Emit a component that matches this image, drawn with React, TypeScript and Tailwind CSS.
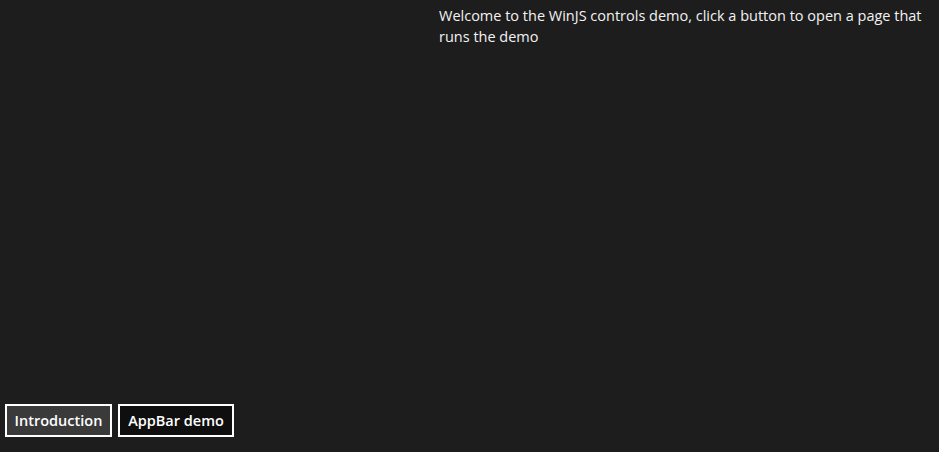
const App = () => {
  return (
    <div className="h-[452px] w-full bg-[#1d1d1d] text-white flex flex-col justify-between font-['Open_Sans',sans-serif]">
      <div className="flex justify-end pt-[5px]">
        <p className="w-[500px] pr-[3px] text-[14.5px] leading-[21px] text-[#f2f2f2]">
          Welcome to the WinJS controls demo, click a button to open a page that runs the demo
        </p>
      </div>
      <div className="flex gap-[6px] pl-[5px] pb-[15px]">
        <button className="h-[33px] w-[107px] border-2 border-white bg-[#3a3a3a] text-[14.5px] font-semibold">
          Introduction
        </button>
        <button className="h-[33px] w-[116px] border-2 border-white bg-[#0f0f0f] text-[14.5px] font-semibold">
          AppBar demo
        </button>
      </div>
    </div>
  )
}

export default App
